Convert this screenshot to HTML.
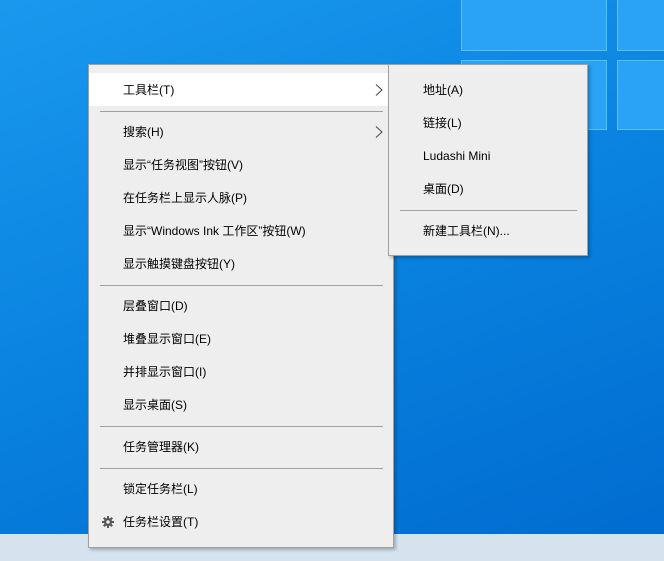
<!DOCTYPE html>
<html><head><meta charset="utf-8"><style>
*{margin:0;padding:0;box-sizing:border-box}
body{width:664px;height:561px;overflow:hidden;position:relative;
background:linear-gradient(160deg,#1a98ee 0%,#0a84e0 45%,#006ad0 100%);
font-family:"Liberation Sans","Noto Sans CJK SC",sans-serif;font-size:12px;color:#000}
.pane{position:absolute;background:#2aa2f6;border:1px solid #5cc0ff}
.tb{position:absolute;left:0;top:534px;width:664px;height:27px;background:#d6e3ef}
.menu{position:absolute;background:#eeeeee;border:1px solid #a0a0a0;box-shadow:2px 2px 3px rgba(0,0,0,.25)}
.it{position:absolute;left:0;right:0;height:33px;line-height:35px;padding-left:34px;white-space:nowrap}
.sep{position:absolute;left:11px;right:10px;height:1px;background:#a0a0a0}
.arr{position:absolute;right:10px;top:0;font-size:14px;color:#444;line-height:33px}
</style></head><body>
<div class="pane" style="left:461px;top:-2px;width:146px;height:53px"></div>
<div class="pane" style="left:617px;top:-2px;width:52px;height:53px"></div>
<div class="pane" style="left:461px;top:60px;width:146px;height:70px"></div>
<div class="pane" style="left:617px;top:60px;width:52px;height:70px"></div>
<div class="tb"></div>

<div class="menu" style="left:88px;top:64px;width:306px;height:484px">
<div class="it" style="top:8px;background:#fff">工具栏(T)<span class="arr">
<svg width="8" height="12" viewBox="0 0 8 12" style="margin-top:11px"><path d="M1 0.5 L7 6 L1 11.5" fill="none" stroke="#444" stroke-width="1"/></svg></span></div>
<div class="sep" style="top:46px"></div>
<div class="it" style="top:50px">搜索(H)<span class="arr">
<svg width="8" height="12" viewBox="0 0 8 12" style="margin-top:11px"><path d="M1 0.5 L7 6 L1 11.5" fill="none" stroke="#444" stroke-width="1"/></svg></span></div>
<div class="it" style="top:83px">显示“任务视图”按钮(V)</div>
<div class="it" style="top:116px">在任务栏上显示人脉(P)</div>
<div class="it" style="top:149px">显示“Windows Ink 工作区”按钮(W)</div>
<div class="it" style="top:182px">显示触摸键盘按钮(Y)</div>
<div class="sep" style="top:220px"></div>
<div class="it" style="top:224px">层叠窗口(D)</div>
<div class="it" style="top:257px">堆叠显示窗口(E)</div>
<div class="it" style="top:290px">并排显示窗口(I)</div>
<div class="it" style="top:323px">显示桌面(S)</div>
<div class="sep" style="top:361px"></div>
<div class="it" style="top:365px">任务管理器(K)</div>
<div class="sep" style="top:403px"></div>
<div class="it" style="top:407px">锁定任务栏(L)</div>
<div class="it" style="top:440px"><svg width="12" height="12" viewBox="0 0 12 12" style="position:absolute;left:13px;top:11px"><g fill="#555"><circle cx="6" cy="6" r="4"/><rect x="5" y="0" width="2" height="12"/><rect x="0" y="5" width="12" height="2"/><rect x="5" y="0" width="2" height="12" transform="rotate(45 6 6)"/><rect x="5" y="0" width="2" height="12" transform="rotate(-45 6 6)"/></g><circle cx="6" cy="6" r="1.8" fill="#eee"/></svg>任务栏设置(T)</div>
</div>

<div class="menu" style="left:388px;top:64px;width:200px;height:192px">
<div class="it" style="top:8px">地址(A)</div>
<div class="it" style="top:41px">链接(L)</div>
<div class="it" style="top:74px">Ludashi Mini</div>
<div class="it" style="top:107px">桌面(D)</div>
<div class="sep" style="top:145px"></div>
<div class="it" style="top:149px">新建工具栏(N)...</div>
</div>
</body></html>
